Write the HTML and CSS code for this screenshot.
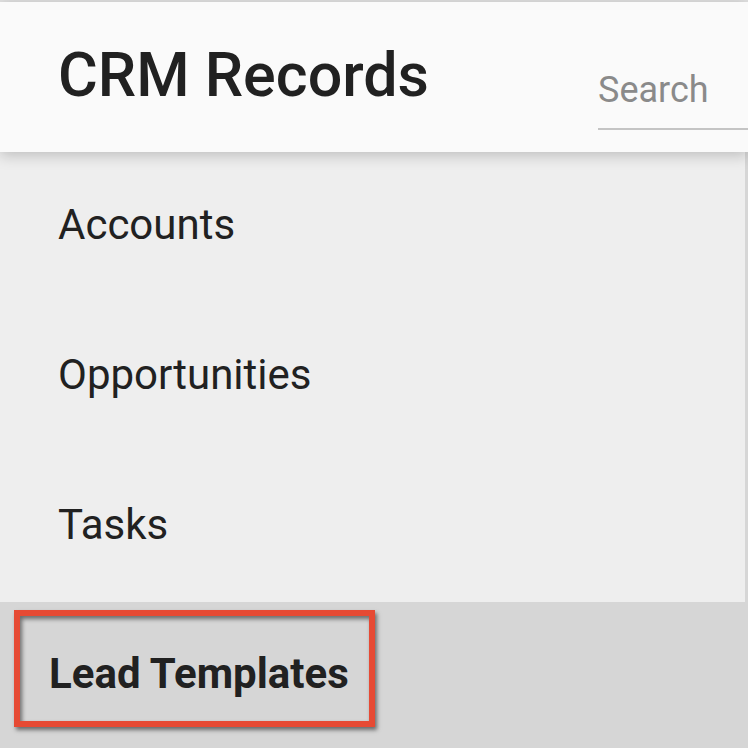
FILE: index.html
```html
<!DOCTYPE html>
<html lang="en">
<head>
<meta charset="utf-8">
<title>CRM Records</title>
<link rel="stylesheet" href="styles.css">
</head>
<body>
<div class="top-strip"></div>
<header class="header">
  <h1 class="title">CRM Records</h1>
  <div class="search">
    <span class="search-label">Search</span>
  </div>
</header>
<nav class="menu">
  <div class="item">Accounts</div>
  <div class="item">Opportunities</div>
  <div class="item">Tasks</div>
  <div class="item item-selected">
    <div class="highlight">Lead Templates</div>
  </div>
</nav>
</body>
</html>
```

FILE: styles.css
```css
* { box-sizing: border-box; }
html, body {
  margin: 0;
  padding: 0;
  width: 748px;
  height: 748px;
  overflow: hidden;
  background: #eeeeee;
  font-family: Roboto, "Liberation Sans", sans-serif;
}
.top-strip {
  height: 2px;
  background: #e2e2e2;
}
.header {
  position: relative;
  z-index: 2;
  height: 150px;
  background: #fafafa;
  display: grid;
  grid-template-columns: 598px 1fr;
  box-shadow: 0 3px 14px rgba(0, 0, 0, 0.22);
}
.title {
  margin: 0;
  padding-left: 58px;
  align-self: center;
  font-size: 61px;
  font-weight: 500;
  color: #212121;
  line-height: 1;
  margin-top: -3px;
}
.search {
  align-self: end;
  margin-bottom: 22px;
  border-bottom: 2px solid #c4c4c4;
  padding-bottom: 20px;
}
.search-label {
  display: block;
  font-size: 36px;
  color: #8a8a8a;
  line-height: 1;
}
.menu {
  display: flex;
  flex-direction: column;
  border-right: 3px solid #d6d6d6;
}
.item {
  height: 150px;
  display: flex;
  align-items: center;
  padding-left: 58px;
  padding-bottom: 6px;
  font-size: 42px;
  color: #212121;
}
.item-selected {
  background: #d6d6d6;
  align-items: flex-start;
  padding: 8px 0 0 14px;
}
.highlight {
  width: 361px;
  height: 117px;
  border: 6px solid #e64a34;
  padding-left: 29px;
  padding-top: 10px;
  display: flex;
  align-items: center;
  font-weight: 700;
  font-size: 42px;
  color: #212121;
  box-shadow: 2px 3px 4px rgba(0, 0, 0, 0.5), inset 2px 3px 4px rgba(0, 0, 0, 0.5);
}
```
